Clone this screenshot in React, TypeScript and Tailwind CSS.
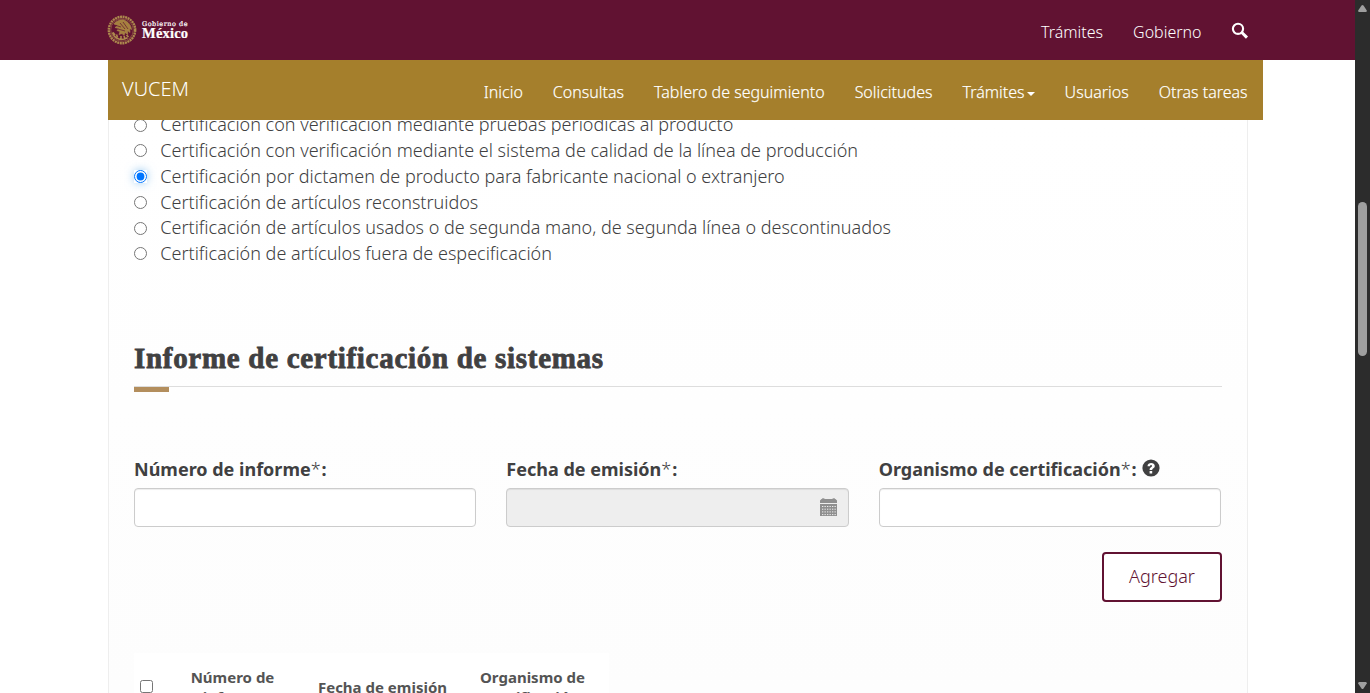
import type { ReactNode } from "react";

const options = [
  "Certificación con verificación mediante pruebas periódicas al producto",
  "Certificación con verificación mediante el sistema de calidad de la línea de producción",
  "Certificación por dictamen de producto para fabricante nacional o extranjero",
  "Certificación de artículos reconstruidos",
  "Certificación de artículos usados o de segunda mano, de segunda línea o descontinuados",
  "Certificación de artículos fuera de especificación",
];

function Emblem() {
  return (
    <svg width="30" height="30" viewBox="0 0 30 30" fill="none" stroke="#ad8a4e">
      <circle cx="15" cy="15" r="13.2" strokeWidth="2.400" strokeDasharray="2 .6" />
      <circle cx="15" cy="15" r="11.3" strokeWidth="1" opacity=".5" />
      <path d="M5.500 17.500c2 6 8 9 15 5.300M8 20l-2-2.500M10.500 22.500l-1-3M14 24v-3M18 24l-1-3M21.500 22l-2-2" strokeWidth="1.600" />
      <path d="M7 9c2-3 7-5 10-4 4 1.500 7 5 7.500 9.500l-2-1 .5 4-2.500-2 .2 4-2.700-2-1 3-2-2-3 1 1-3-3-1 2-2-4-1 3-2z" fill="#a5803f" strokeWidth=".6" />
      <path d="M9 10.500l5 1.500M13 8l5 6M16 7l5 7M11 14l7 2" stroke="#611232" strokeWidth=".7" />
    </svg>
  );
}

function SearchIcon() {
  return (
    <svg width="18" height="18" viewBox="0 0 18 18" fill="none" stroke="#fff">
      <circle cx="7" cy="6.800" r="5.100" strokeWidth="2.100" />
      <path d="M10.800 10.500l5.200 5.100" strokeWidth="3" />
    </svg>
  );
}

function CalendarIcon() {
  const dots: ReactNode[] = [];
  for (let r = 0; r < 4; r++)
    for (let c = 0; c < 6; c++)
      dots.push(<rect key={`${r}-${c}`} x={2 + c * 2.5} y={8 + r * 2.7} width="1.3" height="1" fill="#eee" />);
  return (
    <svg className="-mt-[2px]" width="17" height="18" viewBox="0 0 17 18" fill="#8f8f8f">
      <path d="M0 5V2.500L1.500 1H2V.5Q3 0 4.500 .5V1h8V.5q1.500-.5 2.500 0V1h.5L17 2.500V5z" />
      <path d="M0 6h17v12H0z" />
      {dots}
    </svg>
  );
}

function HelpIcon() {
  return (
    <svg width="18" height="18" viewBox="0 0 18 18">
      <circle cx="9" cy="9" r="8.600" fill="#404041" />
      <path d="M5.500 7.200c0-4.400 7.300-4.300 7.300-.3 0 2.400-2.600 2.200-2.600 4.100H7.600c0-2.900 2.400-2.700 2.400-4 0-1.300-1.900-1.200-1.900.2zM7.600 12h2.600v2.400H7.600z" fill="#fff" />
    </svg>
  );
}

function Field({ label, children, disabled, help }: { label: string; children?: ReactNode; disabled?: boolean; help?: boolean }) {
  return (
    <div className="min-w-0 flex-1">
      <div className="flex h-[26px] items-center text-[18px] font-bold whitespace-nowrap">
        {label}<span className="mr-px font-light">*</span>:
        {help && <span className="ml-[5px] -mt-[2px]"><HelpIcon /></span>}
      </div>
      <div className={`mt-[6px] flex h-[39px] items-center justify-end rounded-[4px] border border-[#ccc] pr-[11px] shadow-[inset_0_1px_1px_rgba(0,0,0,.075)] ${disabled ? "bg-[#eee]" : "bg-white"}`}>
        {children}
      </div>
    </div>
  );
}

export default function App() {
  return (
    <div className="flex h-[693px] w-[1370px] overflow-hidden bg-white font-['Noto_Sans',sans-serif] font-light text-[#404041]">
      <div className="flex min-w-0 flex-1 flex-col">
        <header className="flex h-[60px] shrink-0 items-center bg-[#611232] pl-[107px] text-white">
          <span className="-mt-px"><Emblem /></span>
          <div className="ml-[5px] -mt-px font-['DejaVu_Serif',serif] font-bold">
            <div className="text-[6.500px] leading-[8px] font-normal tracking-[.5px] whitespace-nowrap [-webkit-text-stroke:.2px_#fff]">Gobierno de</div>
            <div className="font-['Liberation_Serif',serif] text-[14.500px] leading-[11px] tracking-[.2px] [-webkit-text-stroke:.2px_#fff]">México</div>
          </div>
          <nav className="mr-[106.500px] ml-auto flex items-center text-[16px]">
            <span className="mt-[4px]">Trámites</span>
            <span className="mt-[4px] ml-[30px]">Gobierno</span>
            <span className="ml-[29px] pt-px"><SearchIcon /></span>
          </nav>
        </header>
        <nav className="mr-[92px] ml-[108px] flex h-[60px] shrink-0 items-center bg-[#a57f2c] pr-[15.400px] pl-[14px] text-[16px] text-white">
          <span className="-mt-[2px] text-[20px]">VUCEM</span>
          <div className="mt-[4px] ml-auto flex gap-[30px] whitespace-nowrap [-webkit-text-stroke:.25px_rgba(255,255,255,.8)]">
            <span>Inicio</span>
            <span>Consultas</span>
            <span>Tablero de seguimiento</span>
            <span>Solicitudes</span>
            <span className="flex items-center">Trámites<i className="mt-[3px] ml-[2px] border-x-4 border-t-4 border-x-transparent border-t-white" /></span>
            <span>Usuarios</span>
            <span>Otras tareas</span>
          </div>
        </nav>
        <main className="mr-[107px] ml-[108px] flex h-[573px] flex-col overflow-hidden border-x border-[#eee] bg-linear-to-b from-white to-[#fdfdfd] px-[25px]">
          <div className="-mt-[7.600px] flex flex-col text-[18px] leading-[25.714px]">
            {options.map((option, i) => (
              <label key={option} className="flex h-[25.714px] items-center whitespace-nowrap">
                <input type="radio" name="cert" defaultChecked={i === 2} className={`mr-[13.300px] h-[13px] w-[13px] ${i === 2 ? "rounded-full shadow-[0_0_8px_rgba(102,175,233,.6)]" : ""}`} />
                {option}
              </label>
            ))}
          </div>
          <h2 className="mt-[71.600px] h-[40px] font-['Liberation_Serif',serif] text-[29px] leading-[40px] font-bold tracking-[.7px] whitespace-nowrap [-webkit-text-stroke:.8px_#404041]">Informe de certificación de sistemas</h2>
          <div className="mt-[8px] h-[6px] border-t border-[#ddd]">
            <div className="h-[5px] w-[35px] bg-[#b38e5d]" />
          </div>
          <div className="mt-[64px] mr-px flex gap-[30px]">
            <Field label="Número de informe" />
            <Field label="Fecha de emisión" disabled><CalendarIcon /></Field>
            <Field label="Organismo de certificación" help />
          </div>
          <button className="mt-[25px] h-[50px] w-[120px] shrink-0 self-end rounded-[4px] border-2 border-[#611232] bg-white pb-[2px] text-[18px] font-light text-[#611232]">Agregar</button>
          <div className="mt-[51px] flex h-[68px] w-[475px] shrink-0 items-center bg-white text-center text-[15px] leading-[20px] font-bold whitespace-nowrap text-[#545454]">
            <input type="checkbox" className="-mt-[2px] ml-[6px] h-[13px] w-[13px]" />
            <div className="ml-[29.500px] w-[100px]">Número de<br />informe</div>
            <div className="ml-[30px] w-[140px]">Fecha de emisión</div>
            <div className="ml-[25px] w-[110px]">Organismo de<br />certificación</div>
          </div>
        </main>
      </div>
      <aside className="flex w-[15px] shrink-0 flex-col items-center bg-[#2c2c2c]">
        <svg width="15" height="15" viewBox="0 0 15 15" fill="#9f9f9f"><path d="M6.500 5.500q1-1 2 0l3.300 5q.2 1.500-1 1.500H4.200q-1.200 0-1-1.500z" /></svg>
        <div className="mt-[187px] h-[154px] w-[9px] rounded-full bg-[#9f9f9f]" />
        <svg className="mt-auto" width="15" height="15" viewBox="0 0 15 15" fill="#9f9f9f"><path d="M6.500 10.500q1 1 2 0l3.300-5q.2-1.500-1-1.500H4.200q-1.200 0-1 1.500z" /></svg>
      </aside>
    </div>
  );
}
